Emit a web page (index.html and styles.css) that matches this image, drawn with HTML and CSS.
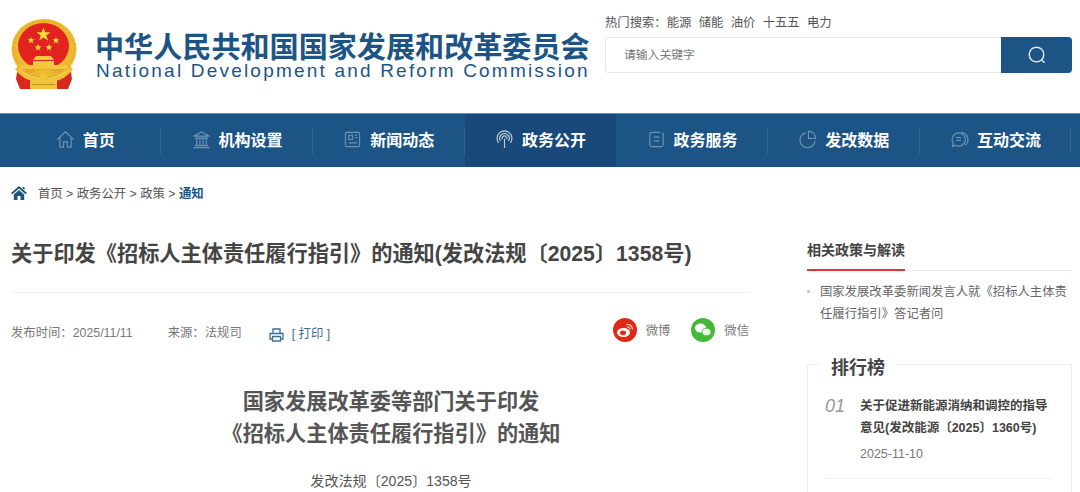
FILE: index.html
```html
<!DOCTYPE html>
<html lang="zh-CN">
<head>
<meta charset="utf-8">
<title>关于印发《招标人主体责任履行指引》的通知</title>
<link rel="stylesheet" href="styles.css">
</head>
<body>
<header class="top">
  <div class="brand">
    <svg class="emblem" viewBox="0 0 66 72" aria-hidden="true">
      <ellipse cx="33" cy="30" rx="32.500" ry="30" fill="#edb92e"/>
      <ellipse cx="33" cy="30" rx="30" ry="28" fill="none" stroke="#d99a1f" stroke-width=".8" stroke-dasharray="2 2"/>
      <ellipse cx="32.500" cy="27" rx="25.500" ry="23" fill="#e3231f"/>
      <polygon points="32.500,8.500 34.300,13.300 39.500,13.300 35.300,16.500 36.900,21.500 32.500,18.500 28.100,21.500 29.700,16.500 25.500,13.300 30.700,13.300" fill="#f8d83a"/>
      <polygon points="20,18 21,20.300 23.500,20.300 21.500,22 22.200,24.400 20,23 17.800,24.400 18.500,22 16.500,20.300 19,20.300" fill="#f8d83a"/>
      <polygon points="45,18 46,20.300 48.500,20.300 46.500,22 47.200,24.400 45,23 42.800,24.400 43.500,22 41.500,20.300 44,20.300" fill="#f8d83a"/>
      <polygon points="27,25 28,27.300 30.500,27.300 28.500,29 29.200,31.400 27,30 24.800,31.400 25.500,29 23.500,27.300 26,27.300" fill="#f8d83a"/>
      <polygon points="38,25 39,27.300 41.500,27.300 39.500,29 40.200,31.400 38,30 35.800,31.400 36.500,29 34.500,27.300 37,27.300" fill="#f8d83a"/>
      <path d="M25 37 H40 L43 41 H22 Z M22 42 H43 V46 H22 Z" fill="#f5c93e"/>
      <path d="M8 46 H57 L56 50 H9 Z" fill="#f3c53a"/>
      <path d="M12 50 H53 L50 54 H44 L40 51 H25 L21 54 H15 Z" fill="#e6a92c"/>
      <path d="M7 47 C10 54 14 57 20 58 V70 H9 L5 60 Z M59 47 C56 54 52 57 46 58 V70 H57 L61 60 Z" fill="#d62a20"/>
      <path d="M7 47 C13 57 24 60 33 60 C42 60 53 57 59 47 L62 50 C54 62 42 63 33 63 C24 63 12 62 4 50 Z" fill="#efc038"/>
      <rect x="19" y="61" width="27" height="9" rx="1.500" fill="#f1c53c"/>
      <circle cx="32.500" cy="57" r="3.500" fill="#f1c53c"/>
      <path d="M21 65.500 H44" stroke="#c9871f" stroke-width="1"/>
    </svg>
    <div class="brand-text">
      <div class="brand-cn">中华人民共和国国家发展和改革委员会</div>
      <div class="brand-en">National Development and Reform Commission</div>
    </div>
  </div>
  <div class="search-area">
    <div class="hot"><span>热门搜索：</span><a>能源</a><a>储能</a><a>油价</a><a>十五五</a><a>电力</a></div>
    <div class="search">
      <div class="search-input">请输入关键字</div>
      <div class="search-btn">
        <svg viewBox="0 0 20 20" width="20" height="20" aria-hidden="true"><circle cx="9.500" cy="9.500" r="7.300" fill="none" stroke="#dbe5ee" stroke-width="1.500"/><path d="M14.800 15 L17.500 17.800" stroke="#dbe5ee" stroke-width="1.500"/></svg>
      </div>
    </div>
  </div>
</header>

<nav class="nav">
  <a class="nav-item">
    <svg class="nav-icon" viewBox="0 0 20 20"><path d="M1.500 10 L10 2 L18.500 10 M4 8 V18 H8 V12.500 H12 V18 H16 V8"/></svg>
    <span>首页</span></a>
  <a class="nav-item">
    <svg class="nav-icon" viewBox="0 0 20 20"><path d="M1.500 6.500 L10 2 L18.500 6.500 Z M3 8.500 H17 M5 9 V16 M8.300 9 V16 M11.700 9 V16 M15 9 V16 M3 16.500 H17 M1.500 18.500 H18.500"/></svg>
    <span>机构设置</span></a>
  <a class="nav-item">
    <svg class="nav-icon" viewBox="0 0 20 20"><path d="M4 2.500 H16 Q17.500 2.500 17.500 4 V16 Q17.500 17.500 16 17.500 H4 Q2.500 17.500 2.500 16 V4 Q2.500 2.500 4 2.500 Z M6 5.500 H10 V10 H6 Z M12.500 5.500 H15 M12.500 8 H15 M6 13.500 H15"/></svg>
    <span>新闻动态</span></a>
  <a class="nav-item nav-active">
    <svg class="nav-icon nav-icon-light" viewBox="0 0 20 20"><path d="M10 9 V19 M5.800 11.500 A5 5 0 1 1 14.200 11.500 M3.800 13.500 A7.800 7.800 0 1 1 16.200 13.500 M7.800 9.800 A2.500 2.500 0 1 1 12.200 9.800"/></svg>
    <span>政务公开</span></a>
  <a class="nav-item">
    <svg class="nav-icon" viewBox="0 0 20 20"><path d="M14 2.500 H5 Q3 2.500 3 4.500 V15.500 Q3 17.500 5 17.500 H15 Q17 17.500 17 15.500 V2.500 M7 7.500 H13 M7 11.500 H13"/></svg>
    <span>政务服务</span></a>
  <a class="nav-item">
    <svg class="nav-icon" viewBox="0 0 20 20"><path d="M8.500 2.800 A8 8 0 1 0 18 11.500 M11 1.500 A7 7 0 0 1 18.500 9 H11 Z"/></svg>
    <span>发改数据</span></a>
  <a class="nav-item">
    <svg class="nav-icon" viewBox="0 0 20 20"><path d="M9 3 A7 7 0 1 1 5.500 16 L2.500 17.500 L3.200 13.500 A7 7 0 0 1 9 3 Z M12 2.500 A8 7.500 0 0 1 15.500 16 M6.500 8 H11.500 M6.500 11 H11.500"/></svg>
    <span>互动交流</span></a>
</nav>

<div class="crumb">
  <svg class="crumb-home" viewBox="0 0 16 14" aria-hidden="true"><path d="M8 0 L16 7 L14.500 8.300 L8 2.600 L1.500 8.300 L0 7 Z M2.800 8.500 L8 4 L13.200 8.500 V14 H9.500 V10 H6.500 V14 H2.800 Z M11.500 1 H13.500 V4 L11.500 2.300 Z"/></svg>
  <span>首页 &gt; 政务公开 &gt; 政策 &gt; <b>通知</b></span>
</div>

<main class="layout">
  <article class="article">
    <h1 class="title">关于印发《招标人主体责任履行指引》的通知(发改法规〔2025〕1358号)</h1>
    <div class="meta">
      <span class="meta-date">发布时间：2025/11/11</span>
      <span class="meta-src">来源：法规司</span>
      <svg class="print-icon" viewBox="0 0 15 14" aria-hidden="true"><path d="M4 5 V1 H11 V5 M3.500 11 H1 V5.500 H14 V11 H11.500 M3.500 8.500 H11.500 V13 H3.500 Z" fill="none" stroke="#3d6c95" stroke-width="1.300"/></svg>
      <span class="print">[ 打印 ]</span>
      <span class="share">
        <svg class="share-icon" viewBox="0 0 24 24" aria-hidden="true"><circle cx="12" cy="12" r="12" fill="#df2a17"/><ellipse cx="10.500" cy="14.500" rx="6.500" ry="4.600" fill="#fff"/><ellipse cx="10" cy="14.800" rx="3" ry="2.400" fill="#df2a17"/><path d="M13.500 6.500 A5 5 0 0 1 19.500 11.500 M14 9 A2.500 2.500 0 0 1 17 11.500" fill="none" stroke="#f8c9b8" stroke-width="1.300"/></svg>
        <span class="share-label">微博</span>
        <svg class="share-icon share-gap" viewBox="0 0 24 24" aria-hidden="true"><circle cx="12" cy="12" r="12" fill="#45b838"/><ellipse cx="9.500" cy="10" rx="5.500" ry="4.500" fill="#fff"/><ellipse cx="15.500" cy="14" rx="4.500" ry="3.700" fill="#eaf7e6" stroke="#45b838" stroke-width=".8"/></svg>
        <span class="share-label">微信</span>
      </span>
    </div>
    <div class="doc">
      <h2 class="doc-title">国家发展改革委等部门关于印发<br>《招标人主体责任履行指引》的通知</h2>
      <p class="doc-no">发改法规〔2025〕1358号</p>
    </div>
  </article>

  <aside class="side">
    <div class="side-head"><span>相关政策与解读</span></div>
    <ul class="side-list">
      <li>国家发展改革委新闻发言人就《招标人主体责任履行指引》答记者问</li>
    </ul>
    <section class="rank">
      <h3 class="rank-title">排行榜</h3>
      <div class="rank-item">
        <span class="rank-no">01</span>
        <div class="rank-body">
          <div class="rank-text">关于促进新能源消纳和调控的指导意见(发改能源〔2025〕1360号)</div>
          <div class="rank-date">2025-11-10</div>
        </div>
      </div>
    </section>
  </aside>
</main>
</body>
</html>
```
FILE: styles.css
```css
* { box-sizing: border-box; }
html, body { margin: 0; height: 492px; overflow: hidden; background: #fff; }
body { font-family: "Liberation Sans", "Noto Sans CJK SC", sans-serif; color: #555; width: 1080px; }

.top { height: 113px; display: flex; justify-content: space-between; padding: 0 8px 0 11px; }
.brand { display: flex; align-items: flex-start; padding-top: 19px; }
.emblem { width: 66px; height: 72px; display: block; }
.brand-text { margin-left: 18px; padding-top: 11px; color: #1c5585; }
.brand-cn { font: 700 29.100px/31px "Noto Sans CJK SC", sans-serif; white-space: nowrap; width: 495px; }
.brand-en { font: 400 19px/18px "Liberation Sans", sans-serif; letter-spacing: 2.200px; white-space: nowrap; margin: 1px 0 0 1px; }

.search-area { width: 467px; padding-top: 15px; }
.hot { font-size: 12.350px; line-height: 16px; color: #555; white-space: nowrap; }
.hot a { margin-right: 7.300px; }
.search { display: flex; height: 36px; margin-top: 6px; }
.search-input { flex: 1; border: 1px solid #e8e8e8; border-right: 0; border-radius: 4px 0 0 4px; padding-left: 18px; font-size: 11.800px; line-height: 35px; color: #777; }
.search-btn { width: 71px; background: #1c5585; border-radius: 0 4px 4px 0; display: flex; align-items: center; justify-content: center; }

.nav { height: 54px; background: #1c5485; border-top: 1px solid #6d93b3; display: flex; padding-left: 9.500px; }
.nav-item { width: 151.700px; height: 53px; padding-bottom: 3px; display: flex; align-items: center; justify-content: center; gap: 8px; color: #fff; font: 700 16px/20px "Noto Sans CJK SC", sans-serif; position: relative; }
.nav-item::after { content: ""; position: absolute; right: 0; top: 13px; height: 27px; width: 1px; background: #2f6696; }
.nav-active { background: #18497a; }
.nav-active::after { display: none; }
.nav-icon { width: 19px; height: 19px; fill: none; stroke: #6f93b3; stroke-width: 1.200; flex: none; }
.nav-icon-light { stroke: #c0ccd8; }

.crumb { height: 53px; padding-bottom: 2px; display: flex; align-items: center; padding-left: 11px; font-size: 12.350px; color: #555; }
.crumb-home { width: 16px; height: 14px; fill: #1c5585; margin-right: 11px; }
.crumb b { color: #1c5585; }

.layout { display: flex; padding-left: 11px; }
.article { width: 739px; }
.title { margin: 20px 0 0; font: 700 21.200px/28px "Liberation Sans", "Noto Sans CJK SC", sans-serif; color: #444; white-space: nowrap; height: 53px; border-bottom: 1px solid #f1f1f1; }
.meta { display: flex; align-items: center; height: 40px; margin-top: 19px; padding-right: 1px; font-size: 12.350px; color: #777; }
.meta-src { margin-left: 35px; }
.print-icon { width: 15px; height: 14px; margin-left: 27px; margin-top: 5px; }
.print { margin-left: 8px; margin-top: 2px; color: #3d6c95; }
.share { margin-left: auto; margin-bottom: 5px; display: flex; align-items: center; }
.share-icon { width: 24px; height: 24px; }
.share-label { margin-left: 9px; }
.share-gap { margin-left: 21px; }
.doc { padding-left: 21px; }
.doc-title { margin: 32px 0 0; text-align: center; font: 700 21.200px/32px "Noto Sans CJK SC", sans-serif; color: #555; }
.doc-no { margin: 22px 0 0; text-align: center; font-size: 14.100px; line-height: 22px; color: #555; }

.side { width: 265px; margin-left: 57px; padding-top: 9px; }
.side-head { height: 42px; border-bottom: 1px solid #e8e8e8; font: 700 14px/20px "Noto Sans CJK SC", sans-serif; color: #444; }
.side-head span { display: inline-block; height: 42px; border-bottom: 2px solid #e0343a; padding-top: 10px; }
.side-list { list-style: none; margin: 10px 0 0; padding: 0 0 0 13px; font-size: 12.350px; line-height: 22px; color: #666; position: relative; }
.side-list li::before { content: ""; position: absolute; left: 0; top: 9px; width: 3px; height: 3px; background: #ccc; }
.rank { position: relative; margin-top: 39px; height: 200px; border: 1px solid #f1f1f1; padding: 30px 18px 0 17px; }
.rank-title { position: absolute; left: 13px; top: -10px; margin: 0; padding: 0 10px; background: #fff; font: 700 18px/22px "Noto Sans CJK SC", sans-serif; color: #444; }
.rank-item { display: flex; border-bottom: 1px solid #f1f1f1; padding-bottom: 15px; }
.rank-no { width: 35px; font: italic 400 18px/22px "Liberation Sans", sans-serif; color: #999; flex: none; }
.rank-text { font: 700 12.500px/22px "Liberation Sans", "Noto Sans CJK SC", sans-serif; color: #444; }
.rank-date { font-size: 12.500px; line-height: 18px; margin-top: 6px; color: #777; }
```
